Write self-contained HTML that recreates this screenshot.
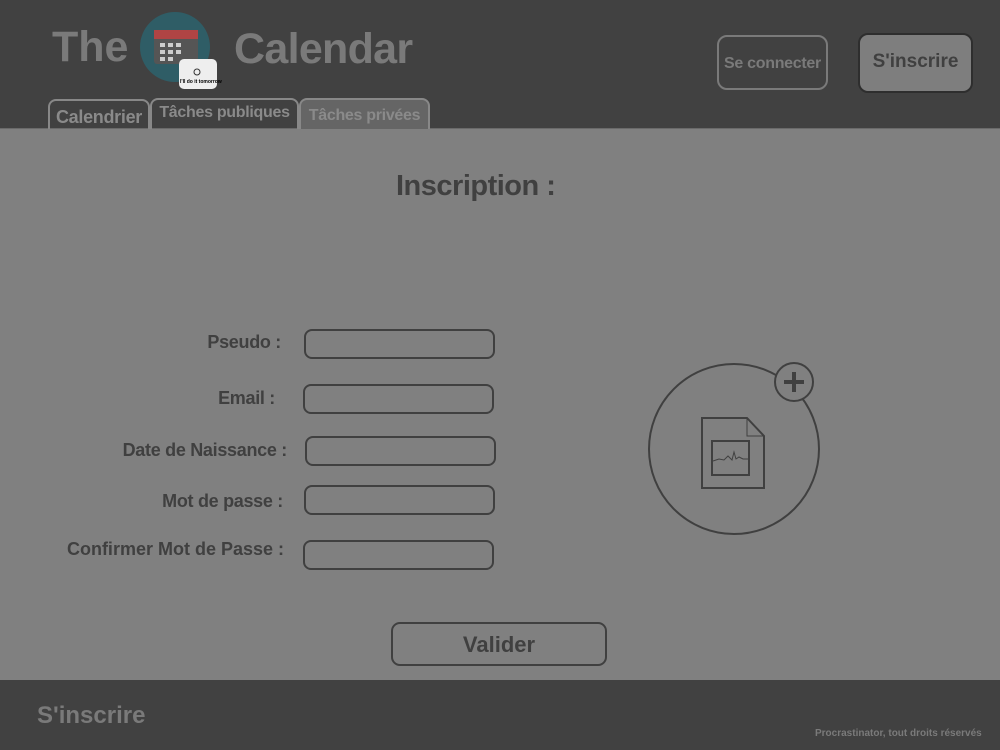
<!DOCTYPE html>
<html><head><meta charset="utf-8"><style>
body{margin:0;width:1000px;height:750px;position:relative;background:#808080;font-family:"Liberation Sans",sans-serif;overflow:hidden;font-weight:bold}
.a{position:absolute}
.hdr{left:0;top:0;width:1000px;height:128px;background:#414141;border-bottom:1px solid #6a6a6a}
.ftr{left:0;top:680px;width:1000px;height:70px;background:#414141}
.lbl{color:#404040;font-size:18px;text-align:right;width:260px;letter-spacing:-0.3px}
.inp{width:188px;height:28px;border:2px solid #404040;border-radius:8px;box-sizing:border-box}
.tab{border:2px solid #888;border-bottom:none;border-radius:8px 8px 0 0;box-sizing:border-box;color:#8a8a8a;font-size:16px;text-align:center;letter-spacing:-0.3px}
</style></head><body>
<div class="a hdr"></div>
<div class="a" style="left:52px;top:23px;font-size:43px;color:#7a7a7a">The</div>
<div class="a" style="left:234px;top:25px;font-size:43px;color:#7a7a7a;letter-spacing:-0.7px">Calendar</div>
<svg class="a" style="left:140px;top:12px" width="82" height="80">
<circle cx="35" cy="35" r="35" fill="#2f5d66"/>
<rect x="14" y="18" width="44" height="34" rx="3" fill="#555"/>
<rect x="14" y="18" width="44" height="9" fill="#b04444"/>
<g fill="#ccc"><rect x="20" y="31" width="5" height="4"/><rect x="28" y="31" width="5" height="4"/><rect x="36" y="31" width="5" height="4"/><rect x="20" y="38" width="5" height="4"/><rect x="28" y="38" width="5" height="4"/><rect x="36" y="38" width="5" height="4"/><rect x="20" y="45" width="5" height="4"/><rect x="28" y="45" width="5" height="4"/></g>
<rect x="39" y="47" width="38" height="30" rx="5" fill="#eee"/>
<circle cx="57" cy="60" r="3" fill="none" stroke="#333"/>
<text x="40" y="71" font-size="5" fill="#000">I'll do it tomorrow</text>
</svg>
<div class="a tab" style="left:48px;top:99px;width:102px;height:30px;line-height:32px;font-size:18px">Calendrier</div>
<div class="a tab" style="left:150px;top:98px;width:149px;height:31px;line-height:26px">Tâches publiques</div>
<div class="a tab" style="left:299px;top:98px;width:131px;height:31px;line-height:32px;background:#656565;color:#8a8a8a">Tâches privées</div>
<div class="a" style="left:717px;top:35px;width:111px;height:55px;border:2px solid #7a7a7a;border-radius:10px;box-sizing:border-box;color:#7a7a7a;font-size:16px;text-align:center;line-height:54px;letter-spacing:-0.3px">Se connecter</div>
<div class="a" style="left:858px;top:33px;width:115px;height:60px;border:2px solid #2e2e2e;border-radius:10px;box-sizing:border-box;background:#7e7e7e;color:#404040;font-size:19px;text-align:center;line-height:54px">S'inscrire</div>
<div class="a" style="left:396px;top:170px;font-size:29px;color:#404040;letter-spacing:-0.5px">Inscription :</div>
<div class="a lbl" style="left:21px;top:332px">Pseudo :</div><div class="a inp" style="left:304px;top:329px;width:191px;height:30px"></div>
<div class="a lbl" style="left:15px;top:388px">Email :</div><div class="a inp" style="left:303px;top:384px;width:191px;height:30px"></div>
<div class="a lbl" style="left:27px;top:440px">Date de Naissance :</div><div class="a inp" style="left:305px;top:436px;width:191px;height:30px"></div>
<div class="a lbl" style="left:23px;top:491px">Mot de passe :</div><div class="a inp" style="left:304px;top:485px;width:191px;height:30px"></div>
<div class="a lbl" style="left:22px;top:539px;width:262px;letter-spacing:0">Confirmer Mot de Passe :</div><div class="a inp" style="left:303px;top:540px;width:191px;height:30px"></div>
<svg class="a" style="left:640px;top:355px" width="190" height="185">
<circle cx="94" cy="94" r="85" fill="none" stroke="#404040" stroke-width="2"/>
<circle cx="154" cy="27" r="19" fill="#808080" stroke="#404040" stroke-width="2"/>
<path d="M154 17v20M144 27h20" stroke="#404040" stroke-width="4"/>
<path d="M62 63h45l17 18v52h-62z" fill="none" stroke="#404040" stroke-width="2"/>
<path d="M107 63v18h17" fill="none" stroke="#404040" stroke-width="1"/>
<rect x="72" y="86" width="37" height="34" fill="none" stroke="#404040" stroke-width="2"/>
<path d="M73 106l6-2 5 1 4-4 4 4 2-8 2 7 3-2 4 2 5 0" fill="none" stroke="#404040"/>
</svg>
<div class="a" style="left:391px;top:622px;width:216px;height:44px;border:2px solid #404040;border-radius:9px;box-sizing:border-box;color:#404040;font-size:22px;text-align:center;line-height:41px">Valider</div>
<div class="a ftr"></div>
<div class="a" style="left:37px;top:702px;font-size:24px;color:#7a7a7a">S'inscrire</div>
<div class="a" style="left:815px;top:728px;font-size:10px;color:#7a7a7a">Procrastinator, tout droits réservés</div>
</body></html>
